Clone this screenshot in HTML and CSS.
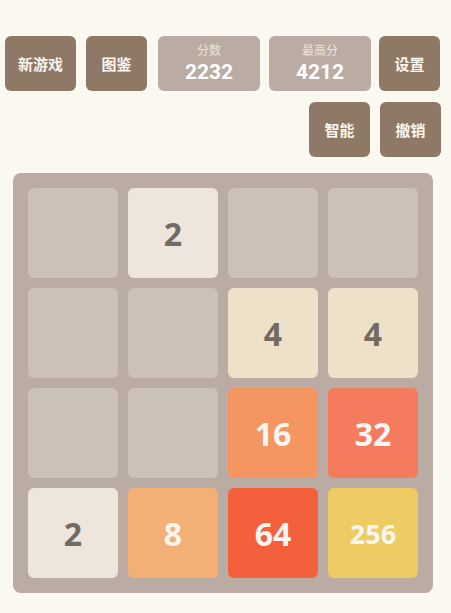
FILE: index.html
```html
<!DOCTYPE html>
<html lang="zh">
<head>
  <meta charset="UTF-8">
  <meta name="viewport" content="width=device-width, initial-scale=1.0">
  <title>2048</title>
  <link rel="stylesheet" href="styles.css">
</head>
<body>
  <div class="game">
    <div class="toolbar">
      <button class="btn btn-wide">新游戏</button>
      <button class="btn">图鉴</button>
      <div class="score-box">
        <span class="score-label">分数</span>
        <span class="score-value">2232</span>
      </div>
      <div class="score-box">
        <span class="score-label">最高分</span>
        <span class="score-value">4212</span>
      </div>
      <button class="btn">设置</button>
    </div>
    <div class="toolbar toolbar-right">
      <button class="btn">智能</button>
      <button class="btn">撤销</button>
    </div>

    <div class="board">
      <div class="tile"></div>
      <div class="tile tile-2">2</div>
      <div class="tile"></div>
      <div class="tile"></div>

      <div class="tile"></div>
      <div class="tile"></div>
      <div class="tile tile-4">4</div>
      <div class="tile tile-4">4</div>

      <div class="tile"></div>
      <div class="tile"></div>
      <div class="tile tile-16">16</div>
      <div class="tile tile-32">32</div>

      <div class="tile tile-2">2</div>
      <div class="tile tile-8">8</div>
      <div class="tile tile-64">64</div>
      <div class="tile tile-256">256</div>
    </div>
  </div>
</body>
</html>
```

FILE: styles.css
```css
body {
  margin: 0;
  padding: 0;
  background-color: #fbf8f0;
  font-family: "Noto Sans", "Noto Sans CJK SC", sans-serif;
}
.game {
  padding: 36px 10px 0 5px;
}
.toolbar {
  display: flex;
  gap: 10px;
}
.toolbar-right {
  justify-content: flex-end;
  margin-top: 11px;
}
.btn {
  width: 61px;
  height: 55px;
  border: none;
  border-radius: 6px;
  background-color: #8e7966;
  color: #f9f4ee;
  font-family: "Noto Sans CJK SC", sans-serif;
  font-size: 15px;
  font-weight: bold;
  padding: 0;
}
.btn-wide {
  width: 71px;
}
.score-box {
  width: 102px;
  height: 55px;
  border-radius: 6px;
  background-color: #baaca2;
  display: flex;
  flex-direction: column;
  align-items: center;
  justify-content: center;
  margin: 0 -2px 0 1px;
}
.score-label {
  font-family: "Noto Sans", "Noto Sans CJK SC", sans-serif;
  font-size: 12px;
  line-height: 16px;
  color: #ede4da;
}
.score-value {
  margin-top: 1px;
  font-family: Roboto, "Noto Sans", sans-serif;
  font-size: 21px;
  line-height: 24px;
  font-weight: bold;
  color: #ffffff;
}
.board {
  margin: 16px 0 0 8px;
  width: 390px;
  padding: 15px;
  display: grid;
  grid-template-columns: repeat(4, 90px);
  grid-auto-rows: 90px;
  gap: 10px;
  background-color: #baaca2;
  border-radius: 8px;
}
.tile {
  border-radius: 6px;
  background-color: #cbc1b6;
  display: flex;
  align-items: center;
  justify-content: center;
  font-size: 32px;
  font-weight: bold;
  color: #f9f6f2;
}
.tile-2 {
  background-color: #eee5dd;
  color: #736a62;
}
.tile-4 {
  background-color: #ede1ca;
  color: #736a62;
}
.tile-8 {
  background-color: #f2b077;
}
.tile-16 {
  background-color: #f49562;
}
.tile-32 {
  background-color: #f57b5f;
}
.tile-64 {
  background-color: #f4603c;
}
.tile-256 {
  background-color: #eccc63;
  font-size: 27px;
}
```
